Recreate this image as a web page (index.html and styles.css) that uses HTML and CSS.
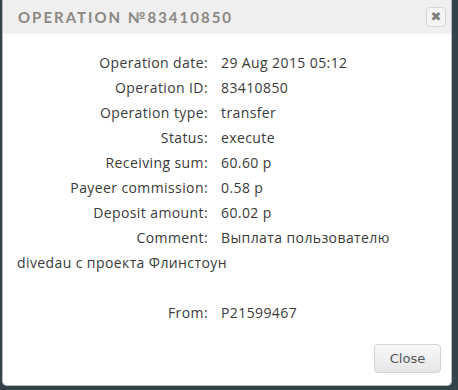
FILE: index.html
```html
<!DOCTYPE html>
<html lang="en">
<head>
  <meta charset="UTF-8" />
  <meta name="viewport" content="width=device-width, initial-scale=1.0" />
  <title>Operation №83410850</title>
  <link rel="stylesheet" href="styles.css">
</head>
<body>
<div class="dialog">
  <!-- ===== Title bar ===== -->
  <div class="dialog-title">
    <span class="title-text">Operation №83410850</span>
    <button class="btn-x" title="close">&#10006;</button>
  </div>

  <!-- ===== Details ===== -->
  <div class="dialog-body">
    <div class="row"><span class="label">Operation date:</span>29 Aug 2015 05:12</div>
    <div class="row"><span class="label">Operation ID:</span>83410850</div>
    <div class="row"><span class="label">Operation type:</span>transfer</div>
    <div class="row"><span class="label">Status:</span>execute</div>
    <div class="row"><span class="label">Receiving sum:</span>60.60 р</div>
    <div class="row"><span class="label">Payeer commission:</span>0.58 р</div>
    <div class="row"><span class="label">Deposit amount:</span>60.02 р</div>
    <div class="row"><span class="label">Comment:</span><span>Выплата пользователю</span> <span>divedau с проекта Флинстоун</span></div>
    <div class="row empty"></div>
    <div class="row"><span class="label">From:</span>P21599467</div>
  </div>

  <!-- ===== Buttons ===== -->
  <div class="dialog-buttons">
    <button class="btn-close">Close</button>
  </div>
</div>
</body>
</html>
```

FILE: styles.css
```css
:root {
  --backdrop: #34424a;
  --head-bg: #efefef;
  --title: #8b8782;
  --text: #3a3a3a;
  --border: #c9c9c9;
}

*, *::before, *::after { box-sizing: border-box; }
body {
  margin: 0;
  background: var(--backdrop);
  font-family: "Open Sans", "Noto Sans", Arial, sans-serif;
  color: var(--text);
}
button { cursor: pointer; }

/* ===== Dialog ===== */
.dialog {
  margin-left: 2px;
  width: 450px;
  height: 386px;
  background: #fff;
  border: 1px solid #b8bcbf;
  border-top: none;
  border-radius: 0 0 5px 5px;
  display: flex;
  flex-direction: column;
}
.dialog-title {
  height: 34px;
  background: var(--head-bg);
  display: flex;
  align-items: center;
  justify-content: space-between;
  padding: 0 5px 0 15px;
}
.title-text {
  font-family: Lato, "Open Sans", sans-serif;
  font-size: 15px;
  font-weight: bold;
  letter-spacing: 2px;
  text-transform: uppercase;
  color: var(--title);
}
.btn-x {
  width: 20px;
  height: 20px;
  padding: 0;
  border: 1px solid #d6d6d6;
  border-radius: 4px;
  background: #f4f4f4;
  color: #7f7f7f;
  font-size: 13px;
  line-height: 18px;
  font-family: "DejaVu Sans", sans-serif;
}

/* ===== Body rows ===== */
.dialog-body {
  flex: 1;
  padding: 16px 17px 0 14px;
  font-size: 14px;
  line-height: 25px;
  letter-spacing: 0.4px;
}
.row .label {
  display: inline-block;
  width: 191px;
  margin-right: 13px;
  text-align: right;
}
.row.empty { height: 25px; }

/* ===== Footer ===== */
.dialog-buttons {
  display: flex;
  justify-content: flex-end;
  padding: 0 10px 12px;
}
.btn-close {
  width: 67px;
  height: 29px;
  border: 1px solid #d3d3d3;
  border-radius: 4px;
  background: linear-gradient(#f8f8f8, #e6e6e6);
  color: #555;
  font-family: "DejaVu Sans", Verdana, sans-serif;
  font-size: 13px;
}
```
